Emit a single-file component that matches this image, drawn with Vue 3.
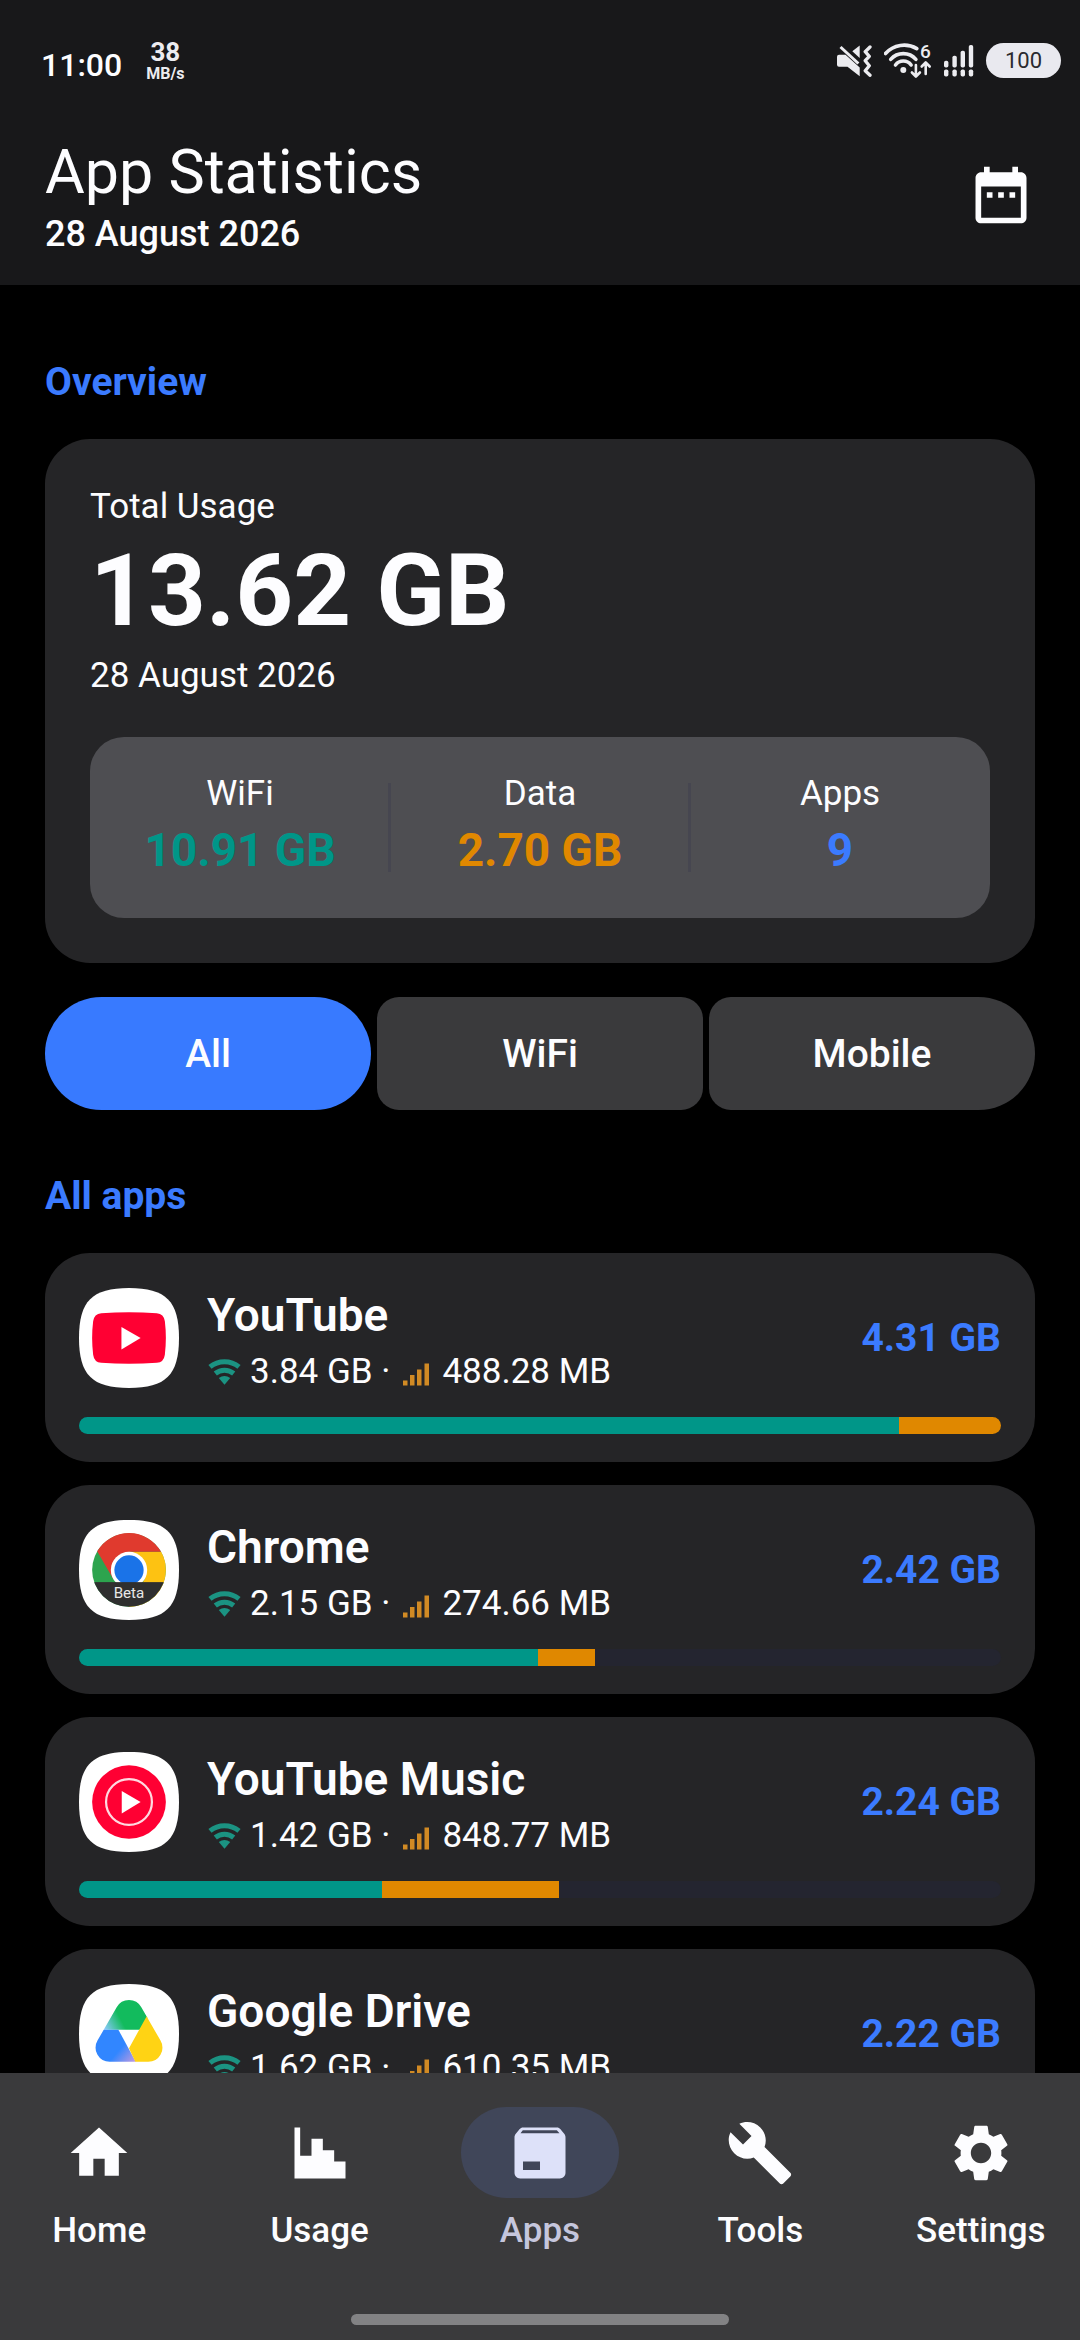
<template>
  <div class="screen">
    <header class="header">
      <div class="status">
        <div class="status-left">
          <span class="clock">11:00</span>
          <span class="speed">
            <span class="speed-value">38</span>
            <span class="speed-unit">MB/s</span>
          </span>
        </div>
        <div class="status-right">
          <svg width="35" height="32" viewBox="0 0 35 32" fill="#ececf0">
            <path d="M2 9.7H8.500L22.700 22.500V31.300L10.500 21.700H2Q0 21.700 0 19.700V11.700Q0 9.700 2 9.700Z"/>
            <path d="M15.300 6.300 22.700 .4V13Z"/>
            <path d="M3.500 2 21.400 18.500" stroke="#ececf0" stroke-width="3"/>
            <path d="M33 2 28.200 6.700 32.300 11.300 28.200 15.700 32.300 20.700 28.200 25.700 33 30.300" fill="none" stroke="#ececf0" stroke-width="3.300" stroke-linecap="round" stroke-linejoin="round"/>
          </svg>
          <svg width="48" height="36" viewBox="0 0 48 36" fill="none" stroke="#ececf0" stroke-linecap="round">
            <g stroke-width="3.600">
              <path d="M1.500 10.500A25 25 0 0 1 32.800 5.600"/>
              <path d="M6.700 16.400A16.700 16.700 0 0 1 31.900 16.400"/>
              <path d="M11.500 22A9.700 9.700 0 0 1 27.100 22"/>
            </g>
            <circle cx="19.300" cy="27" r="3" fill="#ececf0" stroke="none"/>
            <g stroke-width="2.600" stroke-linejoin="round">
              <path d="M31.900 22V33M27.900 29.500 31.900 33.500 35.900 29.500"/>
              <path d="M41.700 31V20M37.700 23.500 41.700 19.500 45.700 23.500"/>
            </g>
            <text class="wifi-gen" x="36" y="15">6</text>
          </svg>
          <svg width="30" height="32" viewBox="0 0 30 32" fill="#ececf0">
            <rect x="0" y="15.700" width="4.400" height="6.800" rx="1.800"/>
            <rect x="8.400" y="10.700" width="4.400" height="11.800" rx="1.800"/>
            <rect x="16.600" y="5.700" width="4.400" height="16.800" rx="1.800"/>
            <rect x="24.800" y="0" width="4.400" height="22.500" rx="1.800"/>
            <rect v-for="x in [0, 8.4, 16.6, 24.8]" :key="x" :x="x" y="24.500" width="4.400" height="7" rx="1.800"/>
          </svg>
          <span class="battery">100</span>
        </div>
      </div>
      <div class="title-bar">
        <div>
          <h1>App Statistics</h1>
          <p class="header-date">28 August 2026</p>
        </div>
        <button class="calendar" aria-label="Pick a date">
          <svg width="68" height="68" viewBox="0 0 24 24" fill="#fdfdff">
            <path d="M9 11H7v2h2v-2zm4 0h-2v2h2v-2zm4 0h-2v2h2v-2zm2-7h-1V2h-2v2H8V2H6v2H5c-1.110 0-1.990.9-1.990 2L3 20c0 1.100.890 2 2 2h14c1.100 0 2-.9 2-2V6c0-1.100-.9-2-2-2zm0 16H5V9h14v11z"/>
          </svg>
        </button>
      </div>
    </header>

    <main class="content">
      <h2>Overview</h2>
      <section class="overview">
        <p class="label">Total Usage</p>
        <p class="total">13.62 GB</p>
        <p class="label">28 August 2026</p>
        <div class="summary">
          <div v-for="stat in stats" :key="stat.label" class="stat">
            <span class="label">{{ stat.label }}</span>
            <span class="stat-value" :class="stat.tone">{{ stat.value }}</span>
          </div>
        </div>
      </section>

      <div class="tabs">
        <button
          v-for="tab in tabs"
          :key="tab"
          class="tab"
          :class="{ active: tab === activeTab }"
          @click="activeTab = tab"
        >{{ tab }}</button>
      </div>

      <h2>All apps</h2>
      <ul class="apps">
        <li v-for="app in apps" :key="app.name" class="app">
          <div class="app-row">
            <svg class="app-icon" width="100" height="100" viewBox="0 0 99 99">
              <path d="M49.500 0C86 0 99 13 99 49.500S86 99 49.500 99 0 86 0 49.500 13 0 49.500 0Z" fill="#fff"/>
              <g v-if="app.icon === 'youtube'">
                <path d="M22 25Q49.500 23 77 25 84 25.500 85 33 87 49.500 85 66 84 73.500 77 74 49.500 76 22 74 15 73.500 14 66 12 49.500 14 33 15 25.500 22 25Z" fill="#ff0033"/>
                <path d="M42 38.500 61 49.500 42 61Z" fill="#fff"/>
              </g>
              <g v-else-if="app.icon === 'chrome'">
                <clipPath id="chrome-clip"><circle cx="49.500" cy="49.500" r="36.500"/></clipPath>
                <circle cx="49.500" cy="49.500" r="36.500" fill="#2da44e"/>
                <path d="M81.250 31.500A36.500 36.500 0 0 1 49.200 86L65.100 58.500 49.500 49.500V31.500Z" fill="#fdc212"/>
                <path d="M18 31A36.500 36.500 0 0 1 81.250 31.500H49.500V49.500L33.900 58.500Z" fill="#e03a2e"/>
                <circle cx="49.500" cy="49.500" r="18" fill="#fff"/>
                <circle cx="49.500" cy="49.500" r="14.500" fill="#1a73e8"/>
                <rect x="10" y="61.500" width="80" height="30" fill="#2f2f2f" clip-path="url(#chrome-clip)"/>
                <text class="beta" x="49.500" y="77">Beta</text>
              </g>
              <g v-else-if="app.icon === 'music'">
                <circle cx="49.500" cy="49.500" r="36.500" fill="#ff0033"/>
                <circle cx="49.500" cy="49.500" r="22.700" fill="none" stroke="#fff" stroke-opacity=".85" stroke-width="2.200"/>
                <path d="M42.300 38.500 61 49.500 42.300 61Z" fill="#fff"/>
              </g>
              <g v-else>
                <linearGradient id="drive-green" x1="25" y1="45" x2="42" y2="36" gradientUnits="userSpaceOnUse">
                  <stop offset="0" stop-color="#8ecbff"/>
                  <stop offset="1" stop-color="#12bb5d"/>
                </linearGradient>
                <linearGradient id="drive-blue" x1="56" y1="77" x2="41" y2="64" gradientUnits="userSpaceOnUse">
                  <stop offset="0" stop-color="#c39be0"/>
                  <stop offset="1" stop-color="#3186ff"/>
                </linearGradient>
                <clipPath id="drive-clip">
                  <path d="M37.300 23A14 14 0 0 1 61.700 23L80.700 56A14 14 0 0 1 68.500 77H30.500A14 14 0 0 1 18.300 56Z"/>
                </clipPath>
                <g clip-path="url(#drive-clip)">
                  <path d="M10 45.300V10H80L62 45.300Z" fill="url(#drive-green)"/>
                  <path d="M10 45.300H39L56.500 77.500V90H10Z" fill="url(#drive-blue)"/>
                  <path d="M67 32 95 40V90H56V77.500L49.500 63.500Z" fill="#ffd314"/>
                </g>
              </g>
            </svg>
            <div class="app-text">
              <h3>{{ app.name }}</h3>
              <p class="usage">
                <svg width="34" height="34" viewBox="0 0 34 34">
                  <g fill="none" stroke="#1b9382" stroke-width="5">
                    <path d="M3 11.900A22.800 22.800 0 0 1 32 11.900"/>
                    <path d="M8.300 18.500A14.500 14.500 0 0 1 26.700 18.500"/>
                  </g>
                  <path d="M17.500 29.800 11.800 22.900Q17.500 19 23.200 22.900Z" fill="#1b9382"/>
                </svg>
                <span>{{ app.wifi }} GB ·</span>
                <svg width="34" height="34" viewBox="0 0 34 34" fill="#d18a24">
                  <rect x="4" y="25.500" width="4.500" height="5"/>
                  <rect x="11" y="20" width="4.500" height="10.500"/>
                  <rect x="18" y="14.500" width="4.500" height="16"/>
                  <rect x="25.500" y="8.500" width="4.500" height="22"/>
                </svg>
                <span>{{ app.mobile }} MB</span>
              </p>
            </div>
            <span class="app-total">{{ app.total }} GB</span>
          </div>
          <div class="track">
            <div class="track-wifi" :style="{ width: share(app.wifi) }"></div>
            <div class="track-mobile" :style="{ width: share(app.mobile / 1024) }"></div>
          </div>
        </li>
      </ul>
    </main>

    <nav class="nav">
      <div class="nav-items">
        <a
          v-for="item in navItems"
          :key="item.label"
          href="#"
          class="nav-item"
          :class="{ current: item.label === 'Apps' }"
        >
          <span class="pill">
            <svg width="68" height="68" viewBox="0 0 24 24" fill="currentColor">
              <path :d="item.path" fill-rule="evenodd"/>
            </svg>
          </span>
          <span>{{ item.label }}</span>
        </a>
      </div>
      <div class="handle"></div>
    </nav>
  </div>
</template>

<script setup>
import { ref, computed } from 'vue'

const stats = [
  { label: 'WiFi', value: '10.91 GB', tone: 'teal' },
  { label: 'Data', value: '2.70 GB', tone: 'orange' },
  { label: 'Apps', value: '9', tone: 'blue' }
]

const tabs = ['All', 'WiFi', 'Mobile']
const activeTab = ref('All')

const apps = [
  { name: 'YouTube', icon: 'youtube', wifi: '3.84', mobile: '488.28', total: '4.31' },
  { name: 'Chrome', icon: 'chrome', wifi: '2.15', mobile: '274.66', total: '2.42' },
  { name: 'YouTube Music', icon: 'music', wifi: '1.42', mobile: '848.77', total: '2.24' },
  { name: 'Google Drive', icon: 'drive', wifi: '1.62', mobile: '610.35', total: '2.22' }
]

// bars are relative to the app with the highest usage
const highest = computed(() => Math.max(...apps.map(app => Number(app.wifi) + app.mobile / 1024)))
const share = (gb) => `${gb / highest.value * 100}%`

const navItems = [
  { label: 'Home', path: 'M10 20v-6h4v6h5v-8h3L12 3 2 12h3v8z' },
  { label: 'Usage', path: 'M3 3h2v10h4V7h4v4h4v4h4v6H3z' },
  { label: 'Apps', path: 'M20.540 5.230l-1.390-1.680C18.880 3.210 18.470 3 18 3H6c-.470 0-.880.210-1.160.550L3.460 5.230C3.170 5.570 3 6.020 3 6.500V19c0 1.100.9 2 2 2h14c1.100 0 2-.9 2-2V6.500c0-.480-.170-.930-.460-1.270zM6 15h6v3H6zM5.120 5l.810-1h12l.940 1z' },
  { label: 'Tools', path: 'M22.700 19l-9.100-9.100c.9-2.300.4-5-1.500-6.900-2-2-5-2.400-7.400-1.300L9 6 6 9 1.600 4.700C.4 7.100.9 10.100 2.900 12.100c1.900 1.900 4.600 2.400 6.900 1.500l9.100 9.100c.4.4 1 .4 1.400 0l2.300-2.300c.5-.4.5-1.100.1-1.400z' },
  { label: 'Settings', path: 'M19.140 12.940c.040-.3.060-.610.060-.940 0-.320-.020-.640-.070-.940l2.030-1.580c.180-.140.230-.410.120-.610l-1.920-3.320c-.120-.220-.370-.290-.590-.220l-2.390.960c-.5-.380-1.030-.7-1.620-.940l-.360-2.540c-.040-.240-.240-.410-.480-.410h-3.840c-.240 0-.430.170-.470.410l-.360 2.540c-.590.240-1.130.570-1.620.940l-2.390-.960c-.220-.080-.470 0-.590.220L2.740 8.870c-.120.210-.080.470.120.610l2.030 1.580c-.050.3-.090.630-.090.940s.020.640.070.940l-2.030 1.580c-.180.140-.230.410-.120.610l1.920 3.320c.120.220.370.290.590.220l2.390-.960c.5.380 1.030.7 1.620.940l.360 2.540c.050.240.240.410.480.410h3.840c.240 0 .440-.170.470-.410l.360-2.540c.590-.240 1.130-.560 1.620-.940l2.390.960c.220.080.470 0 .590-.220l1.920-3.320c.120-.220.070-.470-.120-.610l-2.010-1.580zM12 15.600c-1.980 0-3.600-1.620-3.600-3.600s1.620-3.600 3.600-3.600 3.600 1.620 3.600 3.600-1.620 3.600-3.600 3.600z' }
]
</script>

<style>
body{
  background-color: #000;
}
</style>

<style scoped>
.screen{
  display: flex;
  flex-direction: column;
  height: 100vh;
  background-color: #000;
  color: #fdfdff;
  font-family: Roboto, "Noto Sans", sans-serif;
}
h1, h2, h3, p, ul{
  margin: 0;
  padding: 0;
}
svg{
  display: block;
  flex-shrink: 0;
}
button{
  border: 0;
  padding: 0;
  background: none;
  color: inherit;
  font-family: inherit;
  cursor: pointer;
}

/* header */
.header{
  background-color: #18181a;
}
.status{
  display: flex;
  justify-content: space-between;
  align-items: center;
  height: 121px;
  padding: 0 19px 0 41px;
}
.status-left, .status-right{
  display: flex;
  align-items: center;
}
.status-left{
  gap: 24px;
}
.status-right{
  gap: 12px;
}
.clock{
  padding-top: 8px;
  font-size: 32px;
  font-weight: 500;
}
.speed{
  display: flex;
  flex-direction: column;
  align-items: center;
  font-weight: bold;
  color: #ececf0;
}
.speed-value{
  font-size: 26px;
  line-height: 26px;
}
.speed-unit{
  font-size: 16px;
  line-height: 18px;
}
.wifi-gen{
  fill: #ececf0;
  stroke: none;
  font-size: 19px;
  font-weight: 500;
}
.battery{
  width: 75px;
  border-radius: 18px;
  background-color: #e9e9ef;
  color: #2a2a2e;
  font-size: 22px;
  line-height: 35px;
  text-align: center;
}
.title-bar{
  display: flex;
  justify-content: space-between;
  align-items: center;
  padding: 11px 45px 28px;
}
h1{
  font-size: 61px;
  font-weight: 400;
  line-height: 80px;
}
.header-date{
  font-size: 36px;
  font-weight: 500;
  line-height: 45px;
}

/* content */
.content{
  flex: 1;
  min-height: 0;
  overflow-y: auto;
  scrollbar-width: none;
  padding: 69px 45px 0;
}
h2{
  margin-bottom: 29px;
  color: #3b7bff;
  font-size: 39px;
  font-weight: bold;
  line-height: 56px;
}
.overview{
  padding: 45px;
  border-radius: 45px;
  background-color: #252527;
}
.label{
  font-size: 35px;
  line-height: 45px;
}
.total{
  font-size: 101px;
  font-weight: bold;
  line-height: 124px;
}
.summary{
  display: grid;
  grid-template-columns: repeat(3, 1fr);
  margin-top: 39px;
  padding: 34px 0;
  border-radius: 34px;
  background-color: #4e4e52;
}
.stat{
  position: relative;
  display: flex;
  flex-direction: column;
  align-items: center;
}
.stat + .stat::before{
  content: "";
  position: absolute;
  left: -2px;
  top: 12px;
  bottom: 12px;
  width: 3px;
  background-color: #464650;
}
.stat-value{
  font-size: 46px;
  font-weight: bold;
  line-height: 68px;
}
.teal{
  color: #009688;
}
.orange{
  color: #e08800;
}
.blue{
  color: #3b7bff;
}

.tabs{
  display: grid;
  grid-template-columns: repeat(3, 1fr);
  gap: 6px;
  margin: 34px 0 58px;
}
.tab{
  height: 113px;
  border-radius: 22px;
  background-color: #3a3a3c;
  font-size: 39px;
  font-weight: 500;
}
.tab:first-child{
  border-radius: 57px 22px 22px 57px;
}
.tab:last-child{
  border-radius: 22px 57px 57px 22px;
}
.tab.active{
  border-radius: 57px;
  background-color: #387aff;
}

/* app list */
.apps{
  display: flex;
  flex-direction: column;
  gap: 23px;
  list-style: none;
}
.app{
  padding: 28px 34px;
  border-radius: 45px;
  background-color: #252527;
}
.app-row{
  display: flex;
  align-items: center;
  gap: 28px;
}
.beta{
  fill: #e8e8e8;
  font-size: 15px;
  text-anchor: middle;
}
.app-text{
  flex: 1;
}
h3{
  font-size: 46px;
  font-weight: 600;
  line-height: 68px;
}
.usage{
  display: flex;
  align-items: center;
  gap: 9px;
  font-size: 35px;
  line-height: 45px;
}
.app-total{
  color: #3b7bff;
  font-size: 39px;
  font-weight: bold;
}
.track{
  display: flex;
  height: 17px;
  margin-top: 23px;
  border-radius: 9px;
  overflow: hidden;
  background-color: #242530;
}
.track-wifi{
  background-color: #009688;
}
.track-mobile{
  background-color: #e08800;
}

/* bottom navigation */
.nav{
  padding: 34px 0 15px;
  background-color: #3a3a3c;
}
.nav-items{
  display: grid;
  grid-template-columns: repeat(5, 1fr);
  gap: 22px;
}
.nav-item{
  display: flex;
  flex-direction: column;
  align-items: center;
  gap: 10px;
  color: #fdfdff;
  font-size: 35px;
  font-weight: 500;
  line-height: 45px;
  text-decoration: none;
}
.pill{
  display: flex;
  justify-content: center;
  align-items: center;
  width: 158px;
  height: 91px;
  border-radius: 46px;
}
.current{
  color: #c5c6dd;
}
.current .pill{
  background-color: #404659;
  color: #dde1f9;
}
.handle{
  width: 35%;
  height: 11px;
  margin: 61px auto 0;
  border-radius: 6px;
  background-color: #828284;
}
</style>
